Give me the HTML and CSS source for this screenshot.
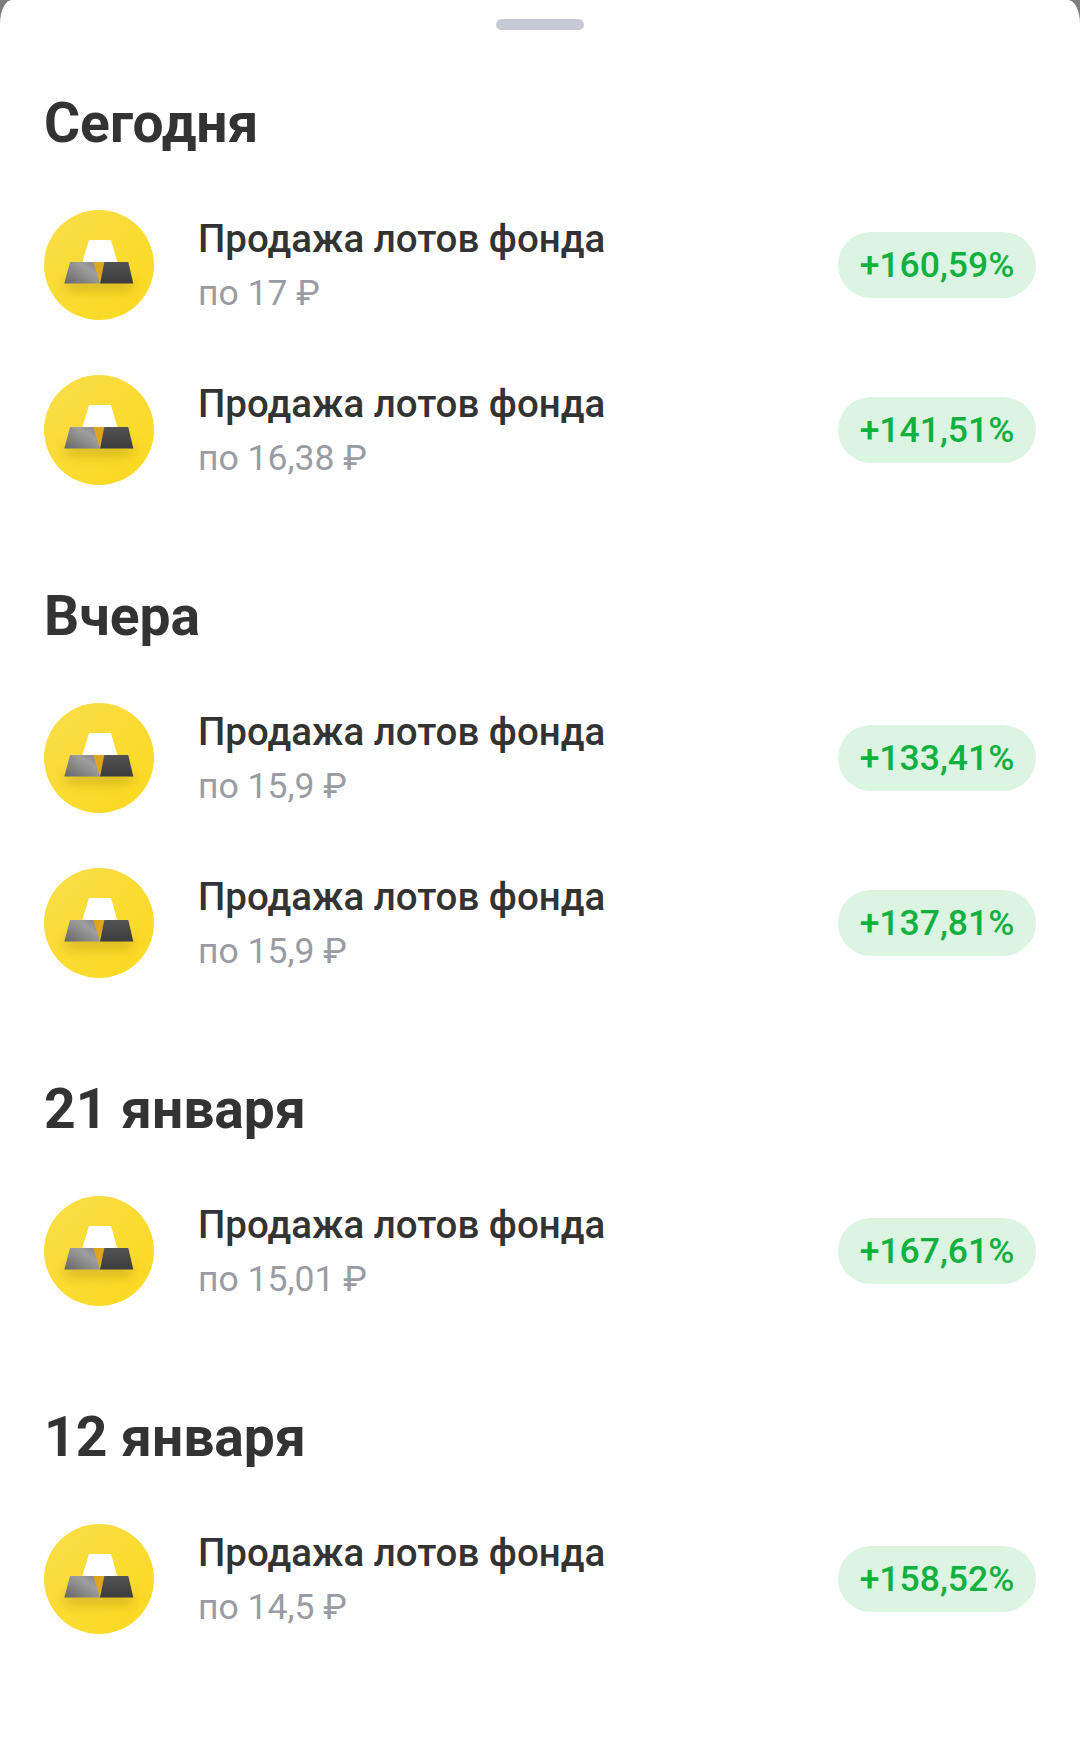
FILE: index.html
```html
<!DOCTYPE html>
<html lang="ru">
<head>
<meta charset="utf-8">
<title>Продажа лотов фонда</title>
<link rel="stylesheet" href="styles.css">
</head>
<body>
<svg class="defs" width="0" height="0" aria-hidden="true">
  <defs>
    <linearGradient id="disc" x1="0" y1="0" x2="1" y2="1">
      <stop offset="0" stop-color="#f8de4c"/>
      <stop offset="0.55" stop-color="#fadb30"/>
      <stop offset="1" stop-color="#fcd91f"/>
    </linearGradient>
    <linearGradient id="barLeft" x1="0" y1="1" x2="1" y2="0.1">
      <stop offset="0" stop-color="#666666"/>
      <stop offset="0.7" stop-color="#9e9e9e"/>
      <stop offset="1" stop-color="#868686"/>
    </linearGradient>
    <linearGradient id="barRight" x1="0" y1="0" x2="0" y2="1">
      <stop offset="0" stop-color="#525252"/>
      <stop offset="1" stop-color="#3c3c3c"/>
    </linearGradient>
    <filter id="soft" x="-30%" y="-200%" width="160%" height="500%">
      <feGaussianBlur stdDeviation="6"/>
    </filter>
    <symbol id="gold" viewBox="0 0 110 110">
      <circle cx="55" cy="55" r="55" fill="url(#disc)"/>
      <rect x="22" y="70" width="66" height="10" fill="#a88c10" opacity="0.5" filter="url(#soft)"/>
      <polygon points="45,30 67,30 73.3,52 38.3,52" fill="#ffffff"/>
      <polygon points="48,52 62,52 55.5,71" fill="#dfa51c"/>
      <polygon points="26,52 49.3,52 56,73.5 20.3,73.5" fill="url(#barLeft)"/>
      <polygon points="60.3,52 84.3,52 89.3,73.5 56,73.5" fill="url(#barRight)"/>
    </symbol>
  </defs>
</svg>
<main class="sheet">
  <div class="handle"></div>

  <section class="group">
    <h2 class="day">Сегодня</h2>
    <div class="row">
      <svg class="icon"><use href="#gold"/></svg>
      <div class="info"><div class="title">Продажа лотов фонда</div><div class="sub">по 17 ₽</div></div>
      <div class="pill">+160,59%</div>
    </div>
    <div class="row">
      <svg class="icon"><use href="#gold"/></svg>
      <div class="info"><div class="title">Продажа лотов фонда</div><div class="sub">по 16,38 ₽</div></div>
      <div class="pill">+141,51%</div>
    </div>
  </section>

  <section class="group">
    <h2 class="day">Вчера</h2>
    <div class="row">
      <svg class="icon"><use href="#gold"/></svg>
      <div class="info"><div class="title">Продажа лотов фонда</div><div class="sub">по 15,9 ₽</div></div>
      <div class="pill">+133,41%</div>
    </div>
    <div class="row">
      <svg class="icon"><use href="#gold"/></svg>
      <div class="info"><div class="title">Продажа лотов фонда</div><div class="sub">по 15,9 ₽</div></div>
      <div class="pill">+137,81%</div>
    </div>
  </section>

  <section class="group">
    <h2 class="day">21 января</h2>
    <div class="row">
      <svg class="icon"><use href="#gold"/></svg>
      <div class="info"><div class="title">Продажа лотов фонда</div><div class="sub">по 15,01 ₽</div></div>
      <div class="pill">+167,61%</div>
    </div>
  </section>

  <section class="group">
    <h2 class="day">12 января</h2>
    <div class="row">
      <svg class="icon"><use href="#gold"/></svg>
      <div class="info"><div class="title">Продажа лотов фонда</div><div class="sub">по 14,5 ₽</div></div>
      <div class="pill">+158,52%</div>
    </div>
  </section>
</main>
</body>
</html>
```
FILE: styles.css
```css
html, body {
  margin: 0;
  padding: 0;
  background: #7d7d7d;
}
body {
  width: 1080px;
  height: 1751px;
  overflow: hidden;
  font-family: Roboto, "Liberation Sans", sans-serif;
}
.defs {
  display: block;
  height: 0;
}
.sheet {
  box-sizing: border-box;
  height: 1751px;
  padding: 19px 44px 0;
  background: #ffffff;
  border-radius: 12px 12px 0 0 / 24px 24px 0 0;
  display: flex;
  flex-direction: column;
  gap: 102px;
}
.handle {
  flex: none;
  width: 88px;
  height: 11px;
  margin: 0 auto -38px;
  border-radius: 6px;
  background: #c8cad3;
}
.group {
  display: flex;
  flex-direction: column;
  gap: 55px;
}
.day {
  margin: 0 0 1px;
  height: 60px;
  font-size: 55.2px;
  line-height: 58px;
  font-weight: 700;
  color: #333333;
}
.row {
  display: flex;
  align-items: center;
  height: 110px;
}
.icon {
  flex: none;
  width: 110px;
  height: 110px;
}
.info {
  flex: 1;
  margin-left: 44px;
  padding-top: 2px;
}
.title {
  font-size: 38.5px;
  line-height: 53px;
  font-weight: 500;
  color: #333333;
}
.sub {
  margin-top: 2px;
  font-size: 35.5px;
  line-height: 53px;
  color: #9a9ca3;
}
.pill {
  flex: none;
  box-sizing: border-box;
  width: 198px;
  height: 66px;
  border-radius: 33px;
  background: #dcf4e2;
  color: #12b03f;
  font-size: 35.5px;
  font-weight: 500;
  line-height: 66px;
  text-align: center;
}
```
